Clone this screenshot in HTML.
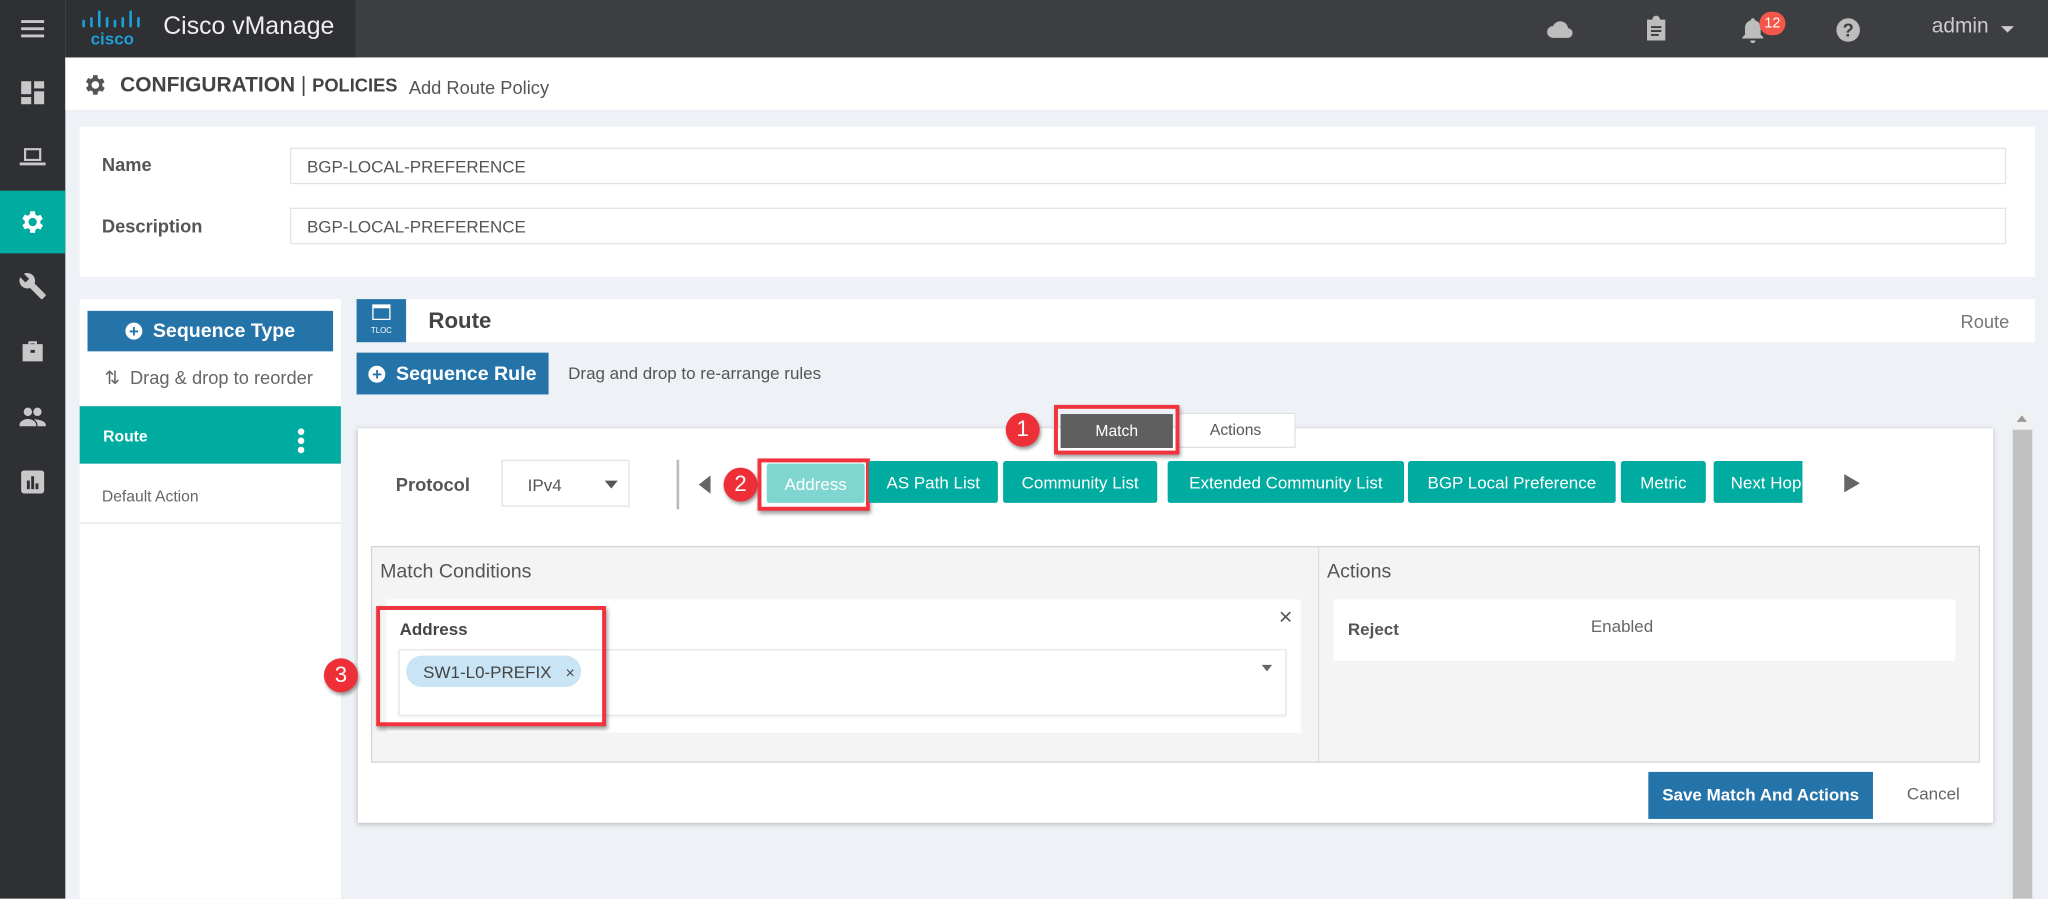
<!DOCTYPE html>
<html><head><meta charset="utf-8"><style>
*{box-sizing:border-box;margin:0;padding:0}
html,body{width:2048px;height:899px;overflow:hidden;background:#eef1f5}
#s{position:absolute;left:0;top:0;width:1568px;height:688px;transform:scale(1.30612);transform-origin:0 0;font-family:"Liberation Sans",sans-serif;background:#eef1f5;color:#444}
.a{position:absolute}
.btn{position:absolute;background:#00aba0;color:#fff;font-size:13px;display:flex;align-items:center;justify-content:center;border-radius:2px}
.red{position:absolute;border:3px solid #f2323c;box-shadow:1px 2px 3px rgba(0,0,0,.4)}
.num{position:absolute;width:26px;height:26px;border-radius:50%;background:#ee2f37;color:#fff;font-size:17px;display:flex;align-items:center;justify-content:center;box-shadow:1px 2px 3px rgba(0,0,0,.4)}
.ic{position:absolute;left:14px;width:22px;height:22px;fill:#c8c8c8}
</style></head><body><div id="s">
<div class="a" style="left:0;top:0;width:50px;height:688px;background:#2f3033"></div>
<div class="a" style="left:0;top:146px;width:50px;height:48px;background:#00aba0"></div>
<svg class="ic" style="top:11px" viewBox="0 0 20 20"><rect x="2" y="4" width="16" height="2"/><rect x="2" y="9" width="16" height="2"/><rect x="2" y="14" width="16" height="2"/></svg>
<svg class="ic" style="top:60px" viewBox="0 0 20 20"><rect x="2" y="2" width="7" height="9"/><rect x="11" y="2" width="7" height="5"/><rect x="11" y="9" width="7" height="9"/><rect x="2" y="13" width="7" height="5"/></svg>
<svg class="ic" style="top:109px" viewBox="0 0 20 20"><path d="M4 4h12v9H4z M5.5 5.5v6h9v-6z" fill-rule="evenodd"/><rect x="1" y="14" width="18" height="2"/></svg>
<svg class="ic" style="top:159px;fill:#fff" viewBox="0 0 24 24"><path d="M19.4 13a7.5 7.5 0 000-2l2.1-1.6-2-3.5-2.5 1a7 7 0 00-1.7-1L15 3h-4l-.4 2.7a7 7 0 00-1.7 1l-2.5-1-2 3.5L6.5 11a7.5 7.5 0 000 2l-2.1 1.6 2 3.5 2.5-1a7 7 0 001.7 1L11 21h4l.4-2.7a7 7 0 001.7-1l2.5 1 2-3.5zM13 15.5a3.5 3.5 0 110-7 3.5 3.5 0 010 7z" transform="translate(-1 0)"/></svg>
<svg class="ic" style="top:208px" viewBox="0 0 24 24"><path d="M22.7 19l-9.1-9.1c.9-2.3.4-5-1.5-6.9-2-2-5-2.4-7.4-1.3L9 6 6 9 1.6 4.7C.4 7.1.9 10.1 2.9 12.1c1.9 1.9 4.6 2.4 6.9 1.5l9.1 9.1c.4.4 1 .4 1.4 0l2.3-2.3c.5-.4.5-1.1.1-1.4z"/></svg>
<svg class="ic" style="top:258px" viewBox="0 0 20 20"><path d="M7 3h6v2h4v12H3V5h4zM8.5 4.5V5h3v-.5z"/><rect x="8.5" y="9" width="3" height="2" fill="#2f3033"/></svg>
<svg class="ic" style="top:308px" viewBox="0 0 24 24"><circle cx="8" cy="8" r="3.5"/><circle cx="16" cy="8" r="3.5"/><path d="M1 19c0-3 4-5 7-5s7 2 7 5v1H1zM13 14.3c3 0 10 1 10 4.7v1h-7v-1c0-2-1.2-3.6-3-4.7z"/></svg>
<svg class="ic" style="top:358px" viewBox="0 0 20 20"><rect x="2" y="2" width="16" height="16" rx="2"/><rect x="6" y="9" width="2" height="6" fill="#2f3033"/><rect x="9" y="6" width="2" height="9" fill="#2f3033"/><rect x="12" y="11" width="2" height="4" fill="#2f3033"/></svg>
<div class="a" style="left:50px;top:0;width:1518px;height:44px;background:#3d3e41"></div>
<div class="a" style="left:50px;top:0;width:222px;height:44px;background:#2f3033"></div>
<svg class="a" style="left:62px;top:6px" width="48" height="30" viewBox="0 0 48 30"><g stroke="#1ba0d7" stroke-width="2" stroke-linecap="round"><path d="M2 10v4M8 8v6M14 3v11M20 8v6M26 10v4M32 8v6M38 3v11M44 8v6"/></g><text x="24" y="28" fill="#1ba0d7" font-size="13" font-weight="bold" text-anchor="middle" font-family="Liberation Sans">cisco</text></svg>
<div class="a" style="left:125px;top:10px;font-size:19px;color:#eee">Cisco vManage</div>
<svg class="a" style="left:1184px;top:14px" width="22" height="16" viewBox="0 0 22 16"><path d="M5 15a4.5 4.5 0 010-9 6 6 0 0111.5 1.5A3.8 3.8 0 0117 15z" fill="#bdbdbd"/></svg>
<svg class="a" style="left:1259px;top:12px" width="18" height="20" viewBox="0 0 18 20"><path d="M2 3h4a3 3 0 016 0h4v16H2z" fill="#bdbdbd"/><rect x="5" y="8" width="8" height="1.5" fill="#3d3e41"/><rect x="5" y="11" width="8" height="1.5" fill="#3d3e41"/><rect x="5" y="14" width="6" height="1.5" fill="#3d3e41"/></svg>
<svg class="a" style="left:1333px;top:13px" width="18" height="20" viewBox="0 0 18 20"><path d="M9 1a1.5 1.5 0 011.5 1.5 6 6 0 014.5 6v5l2 2v1H1v-1l2-2v-5a6 6 0 014.5-6A1.5 1.5 0 019 1zM7 18h4a2 2 0 01-4 0z" fill="#bdbdbd"/></svg>
<div class="a" style="left:1347px;top:9px;width:20px;height:18px;border-radius:9px;background:#f4574a;color:#fff;font-size:11px;text-align:center;line-height:18px">12</div>
<div class="a" style="left:1406px;top:14px;width:18px;height:18px;border-radius:50%;background:#bdbdbd;color:#3d3e41;font-size:14px;font-weight:bold;text-align:center;line-height:18px">?</div>
<div class="a" style="left:1479px;top:12px;font-size:16px;color:#ccc">admin</div>
<div class="a" style="left:1532px;top:20px;border:5px solid transparent;border-top:5px solid #ccc"></div>
<div class="a" style="left:50px;top:44px;width:1518px;height:40px;background:#fff"></div>
<svg class="a" style="left:63px;top:55px" width="20" height="20" viewBox="0 0 24 24"><path d="M19.4 13a7.5 7.5 0 000-2l2.1-1.6-2-3.5-2.5 1a7 7 0 00-1.7-1L15 3h-4l-.4 2.7a7 7 0 00-1.7 1l-2.5-1-2 3.5L6.5 11a7.5 7.5 0 000 2l-2.1 1.6 2 3.5 2.5-1a7 7 0 001.7 1L11 21h4l.4-2.7a7 7 0 001.7-1l2.5 1 2-3.5zM13 15.5a3.5 3.5 0 110-7 3.5 3.5 0 010 7z" transform="translate(-1 0)" fill="#555"/></svg>
<div class="a" style="left:92px;top:57px;font-size:16px;font-weight:bold;color:#444">CONFIGURATION <span style="font-weight:normal">|</span> <span style="font-size:14px">POLICIES</span></div>
<div class="a" style="left:313px;top:59px;font-size:14px;color:#555">Add Route Policy</div>
<div class="a" style="left:61px;top:97px;width:1497px;height:115px;background:#fff"></div>
<div class="a" style="left:78px;top:118px;font-size:14px;font-weight:bold;color:#555">Name</div>
<div class="a" style="left:78px;top:165px;font-size:14px;font-weight:bold;color:#555">Description</div>
<div class="a" style="left:222px;top:113px;width:1314px;height:28px;border:1px solid #e3e3e3;font-size:13px;color:#555;padding:6px 12px">BGP-LOCAL-PREFERENCE</div>
<div class="a" style="left:222px;top:159px;width:1314px;height:28px;border:1px solid #e3e3e3;font-size:13px;color:#555;padding:6px 12px">BGP-LOCAL-PREFERENCE</div>
<div class="a" style="left:61px;top:229px;width:200px;height:459px;background:#fff"></div>
<div class="a" style="left:67px;top:238px;width:188px;height:31px;background:#2574a9;color:#fff;font-size:15px;font-weight:bold;display:flex;align-items:center;justify-content:center"><span style="display:inline-block;width:13px;height:13px;border-radius:50%;background:#fff;color:#2574a9;font-size:13px;line-height:13px;text-align:center;margin-right:8px">+</span>Sequence Type</div>
<div class="a" style="left:80px;top:281px;font-size:14px;color:#666">⇅&nbsp; Drag &amp; drop to reorder</div>
<div class="a" style="left:61px;top:311px;width:200px;height:44px;background:#00aba0"></div>
<div class="a" style="left:79px;top:327px;font-size:12px;font-weight:bold;color:#fff">Route</div>
<div class="a" style="left:228px;top:328px;width:5px;height:5px;border-radius:50%;background:#fff;box-shadow:0 7px 0 #fff,0 14px 0 #fff"></div>
<div class="a" style="left:78px;top:373px;font-size:12px;color:#666">Default Action</div>
<div class="a" style="left:61px;top:400px;width:200px;height:1px;background:#e5e5e5"></div>
<div class="a" style="left:273px;top:229px;width:38px;height:33px;background:#2574a9;color:#fff;font-size:6px;text-align:center;padding-top:22px">TLOC</div>
<div class="a" style="left:285px;top:233px;width:14px;height:12px;border:1.5px solid #fff;border-top-width:3px"></div>
<div class="a" style="left:311px;top:229px;width:1247px;height:33px;background:#fff"></div>
<div class="a" style="left:328px;top:236px;font-size:17px;font-weight:bold;color:#444">Route</div>
<div class="a" style="left:1501px;top:238px;font-size:14px;color:#777">Route</div>
<div class="a" style="left:273px;top:270px;width:147px;height:32px;background:#2574a9;color:#fff;font-size:15px;font-weight:bold;display:flex;align-items:center;justify-content:center"><span style="display:inline-block;width:13px;height:13px;border-radius:50%;background:#fff;color:#2574a9;font-size:13px;line-height:13px;text-align:center;margin-right:8px">+</span>Sequence Rule</div>
<div class="a" style="left:435px;top:278px;font-size:13px;color:#555">Drag and drop to re-arrange rules</div>
<div class="a" style="left:274px;top:328px;width:1252px;height:302px;background:#fff;box-shadow:0 1px 4px rgba(0,0,0,.25)"></div>
<div class="a" style="left:812px;top:317px;width:86px;height:26px;background:#5f5f5f;color:#fff;font-size:12px;text-align:center;line-height:26px">Match</div>
<div class="a" style="left:900px;top:316px;width:92px;height:27px;background:#fff;border:1px solid #e0e0e0;color:#555;font-size:12px;text-align:center;line-height:25px">Actions</div>
<div class="red" style="left:807px;top:310px;width:96px;height:38px"></div>
<div class="num" style="left:770px;top:316px">1</div>
<div class="a" style="left:303px;top:363px;font-size:14px;font-weight:bold;color:#555">Protocol</div>
<div class="a" style="left:384px;top:352px;width:98px;height:36px;border:1px solid #e3e3e3;font-size:13px;color:#555;padding:11px 19px">IPv4</div>
<div class="a" style="left:463px;top:368px;border:5px solid transparent;border-top:6px solid #555"></div>
<div class="a" style="left:518px;top:352px;width:2px;height:38px;background:#bbb"></div>
<div class="a" style="left:535px;top:364px;border:7px solid transparent;border-right:9px solid #666;border-left:0"></div>
<div class="num" style="left:554px;top:358px">2</div>
<div class="btn" style="left:587px;top:355px;width:75px;height:30px;background:#7fd5cf">Address</div>
<div class="red" style="left:580px;top:351px;width:86px;height:40px"></div>
<div class="btn" style="left:665px;top:353px;width:99px;height:32px">AS Path List</div>
<div class="btn" style="left:768px;top:353px;width:118px;height:32px">Community List</div>
<div class="btn" style="left:894px;top:353px;width:181px;height:32px">Extended Community List</div>
<div class="btn" style="left:1078px;top:353px;width:159px;height:32px">BGP Local Preference</div>
<div class="btn" style="left:1241px;top:353px;width:65px;height:32px">Metric</div>
<div class="btn" style="left:1312px;top:353px;width:68px;height:32px;justify-content:flex-start;padding-left:13px;overflow:hidden;white-space:nowrap;border-radius:2px 0 0 2px">Next Hop</div>
<div class="a" style="left:1412px;top:363px;border:7px solid transparent;border-left:12px solid #666;border-right:0"></div>
<div class="a" style="left:284px;top:418px;width:1232px;height:166px;background:#f4f4f4;border:1px solid #d5d5d5"></div>
<div class="a" style="left:1009px;top:419px;width:1px;height:164px;background:#ddd"></div>
<div class="a" style="left:291px;top:429px;font-size:15px;color:#555">Match Conditions</div>
<div class="a" style="left:1016px;top:429px;font-size:15px;color:#555">Actions</div>
<div class="a" style="left:296px;top:459px;width:700px;height:102px;background:#fff"></div>
<div class="a" style="left:306px;top:474px;font-size:13px;font-weight:bold;color:#444">Address</div>
<div class="a" style="left:979px;top:462px;font-size:18px;color:#555">×</div>
<div class="a" style="left:305px;top:497px;width:680px;height:51px;border:1px solid #e6e6e6;box-shadow:0 1px 2px rgba(0,0,0,.08)"></div>
<div class="a" style="left:966px;top:509px;border:4px solid transparent;border-top:5px solid #666"></div>
<div class="a" style="left:311px;top:502px;width:134px;height:24px;border-radius:12px;background:#c9e4f5;font-size:13px;color:#444;padding:5px 0 0 13px">SW1-L0-PREFIX&nbsp;&nbsp; <span style="font-size:12px">×</span></div>
<div class="red" style="left:288px;top:464px;width:176px;height:92px"></div>
<div class="num" style="left:248px;top:504px">3</div>
<div class="a" style="left:1021px;top:459px;width:476px;height:47px;background:#fff"></div>
<div class="a" style="left:1032px;top:474px;font-size:13px;font-weight:bold;color:#555">Reject</div>
<div class="a" style="left:1218px;top:472px;font-size:13px;color:#666">Enabled</div>
<div class="a" style="left:1262px;top:591px;width:172px;height:36px;background:#2574a9;color:#fff;font-size:13px;font-weight:bold;text-align:center;line-height:36px">Save Match And Actions</div>
<div class="a" style="left:1460px;top:600px;font-size:13px;color:#666">Cancel</div>
<div class="a" style="left:1541px;top:316px;width:15px;height:372px;background:#f1f1f1"></div>
<div class="a" style="left:1541px;top:329px;width:15px;height:359px;background:#c1c1c1"></div>
<div class="a" style="left:1544px;top:318px;border:4px solid transparent;border-bottom:5px solid #999;border-top:0"></div>
</div></body></html>
